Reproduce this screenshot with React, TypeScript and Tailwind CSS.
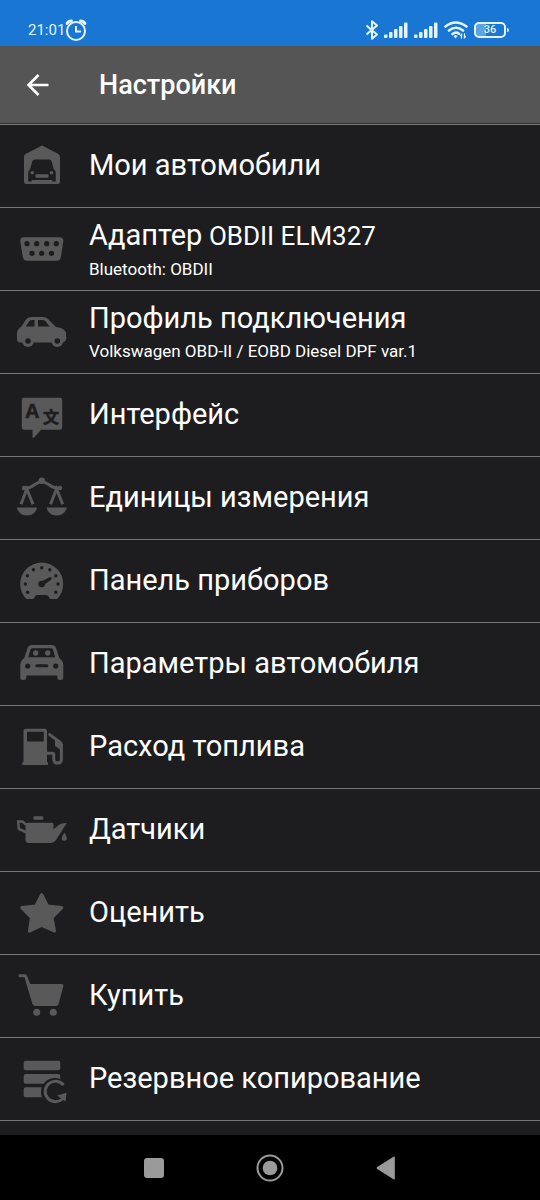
import React from 'react';

interface SettingsItem {
  title: string;
  model?: string;
  subtitle?: string;
  icon: React.ReactNode;
}

const GarageIcon = () => (
  <>
    <path d="M25 4.5 41.5 13q1.500 1 1.500 3v24.500q0 2.500-2.500 2.500h-31q-2.500 0-2.500-2.500V16q0-2 1.500-3z" />
    <path className="fill-[#1d1d1f]" d="M18 18.500h14q2 0 2.700 2l2 7.500q2 1.500 2 4v8.500h-3.500v-1.500h-20.500v1.500h-3.500v-8.500q0-2.500 2-4l2-7.500q.8-2 2.800-2z" />
    <circle cx="15.200" cy="31.700" r="1.800" />
    <circle cx="34.500" cy="31.700" r="1.800" />
    <rect x="18.500" y="33.200" width="13" height="3.500" rx="1" />
  </>
);

const PortIcon = () => (
  <>
    <path d="M7 13.300h35.500q4.300 0 3.800 4.200l-2.300 15q-.6 4.200-4.500 4.200H10.200q-3.900 0-4.500-4.200l-2.400-15q-.4-4.200 3.700-4.200z" />
    <g className="fill-[#1d1d1f]">
      <circle cx="10" cy="19.700" r="2.600" />
      <circle cx="19.700" cy="19.700" r="2.600" />
      <circle cx="29.700" cy="19.700" r="2.600" />
      <circle cx="39.300" cy="19.700" r="2.600" />
      <circle cx="15" cy="29.400" r="2.600" />
      <circle cx="24.700" cy="29.400" r="2.600" />
      <circle cx="34.500" cy="29.400" r="2.600" />
    </g>
  </>
);

const CarSideIcon = () => (
  <>
    <path d="M14 10h12q3 0 5 2l8 8q9 .8 10 6v3q1 1.500 0 3.500-1 3-4 3H2.500Q0 35 0 32v-6q0-3.500 4.500-6.500l4.500-7q1.500-2.500 5-2.500z" />
    <circle cx="11" cy="34" r="5.900" />
    <circle cx="40.300" cy="34" r="5.900" />
    <g className="fill-[#1d1d1f]">
      <path d="M14.500 13h3v6.500H8.800l3.200-5q.8-1.500 2.500-1.500zM21 13h4.500q1.800 0 3 1.200l4 5.300H21z" />
      <circle cx="11" cy="34" r="2.800" />
      <circle cx="40.300" cy="34" r="2.800" />
    </g>
  </>
);

const TranslateIcon = () => (
  <>
    <path d="M7 7.700h36q2.200 0 2.200 2.200v27.600q0 2.200-2.200 2.200H24l-6.500 7.500q-1 .8-2 .3v-7.800H7q-2.200 0-2.200-2.200V9.900q0-2.200 2.200-2.200z" />
    <text className="fill-[#1d1d1f] stroke-[#1d1d1f] font-['Liberation_Sans',sans-serif] text-[20px] font-bold" strokeWidth="0.600" x="8" y="28">A</text>
    <text className="fill-[#1d1d1f] stroke-[#1d1d1f] font-['Noto_Sans_CJK_SC',sans-serif] text-[16px] font-bold" strokeWidth="0.600" x="26" y="33">文</text>
  </>
);

const ScalesIcon = () => (
  <>
    <g className="fill-none stroke-[#595959]" strokeWidth="3" strokeLinecap="round">
      <path d="M7 15.300q6 0 10-3.300l7.700-4.300 7.800 4.300q4 3.300 10.500 3.300" />
      <path strokeWidth="3" strokeLinecap="butt" d="M4 31.300 9.800 16l6.200 15.300M33.500 31.300 39.500 16l6.200 15.300" />
    </g>
    <circle cx="24.800" cy="7.800" r="3.200" />
    <circle cx="7" cy="15" r="2.200" />
    <circle cx="43" cy="15" r="2.200" />
    <path d="M0 34.600h20q0 2-2 4.500-3 3.500-8 3.500t-8-3.500q-2-2.500-2-4.500zM29.700 34.600h20q0 2-2 4.500-3 3.500-8 3.500t-8-3.500q-2-2.500-2-4.500z" />
  </>
);

const GaugeIcon = () => (
  <>
    <path d="M9.500 43Q3.200 37 3.200 28a21.500 21.500 0 0 1 43 0q0 9-6.200 15h-6q-1.500 0-2.500-2.500-.6-1.500-2-1.500h-9.500q-1.400 0-2 1.500-1 2.500-2.500 2.500z" />
    <g className="fill-[#1d1d1f]">
      <circle cx="24.700" cy="11.700" r="1.700" />
      <circle cx="16.400" cy="13.800" r="1.700" />
      <circle cx="32.800" cy="13.800" r="1.700" />
      <circle cx="10.400" cy="19.800" r="1.700" />
      <circle cx="38.800" cy="19.800" r="1.700" />
      <circle cx="8.300" cy="28" r="1.700" />
      <circle cx="41.100" cy="28" r="1.700" />
      <circle cx="10.600" cy="36.300" r="1.700" />
      <circle cx="38.800" cy="36.300" r="1.700" />
      <circle cx="24.700" cy="28" r="3.300" />
      <path d="m23.500 26 9-4.700q1.500-.5 2 .5t-.5 2L26 29.500z" />
    </g>
  </>
);

const CarFrontIcon = () => (
  <>
    <path d="M15 6h19.500q3.500 0 4.500 3l3.300 10q4 2.500 4 7.500v12q0 2.500-3 2.500t-3-2.500v-2h-31v2q0 2.500-3 2.500t-3-2.500v-12q0-5 4-7.500l3.300-10q1-3 4.400-3z" />
    <g className="fill-[#1d1d1f]">
      <path d="M15.500 9.200H34q1.500 0 2 1.300l2.200 7.700H11.300l2.200-7.700q.5-1.300 2-1.300z" />
      <circle cx="10.700" cy="27" r="2.600" />
      <circle cx="38.700" cy="27" r="2.600" />
      <rect x="18.300" y="25.300" width="13" height="3" rx="1.500" />
    </g>
    <circle cx="18.700" cy="14" r="2.700" />
    <circle cx="30.700" cy="14" r="2.700" />
  </>
);

const FuelIcon = () => (
  <>
    <path d="M9 6.700h18.500q2.500 0 2.500 2.500v30.600l1 .8v2.400H5.300v-2.400l1.200-.8V9.200q0-2.500 2.500-2.500z" />
    <rect className="fill-[#1d1d1f]" x="10" y="9.800" width="16.800" height="9.800" rx="1" />
    <path d="M31.300 11.500q1-.8 2.300 0l10 7.200q2.200 1.600 2.200 4.300l-2.500 4.500-5.300-3.500v-5.500l-6.700-5.200z" />
    <path className="fill-none stroke-[#595959]" strokeWidth="3" d="M29.500 31.300H35q1.800 0 1.800 1.700v4.500q0 3.600 3.800 3.600t3.800-3.600V22" />
  </>
);

const OilIcon = () => (
  <>
    <rect x="16.500" y="11.300" width="9.800" height="3.500" rx="1.200" />
    <path d="M11 17.700h24q1.500 0 1.500 1.500v5l6-4.700q2-1.700 7.300-1.500L39 35q-1.800 3-5 3H12q-3.500 0-3.500-3.500V20q0-2.300 2.500-2.300z" />
    <path className="fill-none stroke-[#595959]" strokeWidth="2.500" d="M9.500 20 5.500 16.500H1.200l.6 7.500 8 3.500" />
    <path d="M47.300 27.500q2.500 4 2.500 5.800a2.500 2.500 0 0 1-5 0q0-1.800 2.500-5.800z" />
  </>
);

const StarIcon = () => (
  <path
    className="stroke-[#595959]"
    strokeWidth="3"
    strokeLinejoin="round"
    d="m24.700 6.500 5.800 11.500 14.300 1.600-9.800 10 2.500 13.500-12.800-5.600-12.300 5.600 2.100-13.500-9.800-10L18.900 18z"
  />
);

const CartIcon = () => (
  <>
    <path d="M3 3.300h4.500q2 0 2.700 1.700l3 8H44.500q2.300 0 1.800 2.200l-4.500 17q-.8 2.800-3.600 2.800H19q-3 0-3.800-2.800L7.500 6.200H3q-1.500 0-1.500-1.500T3 3.300z" />
    <circle cx="19.700" cy="41.300" r="3.500" />
    <circle cx="36.300" cy="41.300" r="3.500" />
  </>
);

const BackupIcon = () => (
  <>
    <rect x="6.700" y="6.700" width="36.600" height="9.500" rx="2" />
    <rect x="6.700" y="19.900" width="36.600" height="9.800" rx="2" />
    <rect x="6.700" y="33.200" width="25" height="10" rx="2" />
    <circle className="fill-[#1d1d1f]" cx="38" cy="38" r="14" />
    <path className="fill-none stroke-[#595959]" strokeWidth="3" d="M46.500 31A10.300 10.300 0 1 0 45.500 45" />
    <path d="m49.500 38.800-9.300 2.600 8.300 6.300z" />
  </>
);

const items: SettingsItem[] = [
  { title: 'Мои автомобили', icon: <GarageIcon /> },
  { title: 'Адаптер', model: 'OBDII ELM327', subtitle: 'Bluetooth: OBDII', icon: <PortIcon /> },
  { title: 'Профиль подключения', subtitle: 'Volkswagen OBD-II / EOBD Diesel DPF var.1', icon: <CarSideIcon /> },
  { title: 'Интерфейс', icon: <TranslateIcon /> },
  { title: 'Единицы измерения', icon: <ScalesIcon /> },
  { title: 'Панель приборов', icon: <GaugeIcon /> },
  { title: 'Параметры автомобиля', icon: <CarFrontIcon /> },
  { title: 'Расход топлива', icon: <FuelIcon /> },
  { title: 'Датчики', icon: <OilIcon /> },
  { title: 'Оценить', icon: <StarIcon /> },
  { title: 'Купить', icon: <CartIcon /> },
  { title: 'Резервное копирование', icon: <BackupIcon /> },
];

const SignalIcon = () => (
  <svg className="h-4 w-6 fill-[#e3f4ff]" viewBox="0 0 24 16" aria-hidden="true">
    <rect x="0" y="12.500" width="3.500" height="3.500" rx="1" />
    <rect x="5" y="10" width="3.500" height="6" rx="1" />
    <rect x="10" y="7" width="3.500" height="9" rx="1" />
    <rect x="15" y="4" width="3.500" height="12" rx="1" />
    <rect x="20" y="0.500" width="3.500" height="15.500" rx="1" />
  </svg>
);

const StatusBar = () => (
  <div className="flex h-[46px] items-center justify-between bg-[#1976d2] pt-[14px] pr-[31px] pl-7">
    <div className="flex items-center text-[#e3f4ff]">
      <span className="text-[15px] leading-5">21:01</span>
      <svg className="size-[22px] fill-none stroke-current" viewBox="0 0 22 22" aria-hidden="true">
        <circle cx="11" cy="12" r="9" strokeWidth="2" />
        <path strokeWidth="2" d="M11 7v5.500h5" />
        <path strokeWidth="2.800" strokeLinecap="round" d="M2 4.500Q3.500 2 6.500 2M20 4.500Q18.500 2 15.500 2" />
      </svg>
    </div>
    <div className="flex items-center gap-1.5 text-[#e3f4ff]">
      <svg className="h-5 w-3 fill-none stroke-current" viewBox="0 0 12 20" strokeWidth="2" strokeLinejoin="round" aria-hidden="true">
        <path d="m.5 5.500 10.500 9L6 18.800V1.200L11 5.500.5 14.500" />
      </svg>
      <SignalIcon />
      <SignalIcon />
      <svg className="h-[18px] w-6 fill-none stroke-current" viewBox="0 0 24 18" strokeWidth="2.600" strokeLinecap="round" aria-hidden="true">
        <path d="M1.500 5.500q10-8 21 0M5 9.500q7-5.500 14 0M8.500 13q3.500-2.600 6.500-.3" />
        <path className="fill-current stroke-none" d="m9.500 15 2-1 2 1-2 2.500z" />
        <path strokeWidth="1.300" d="M17.500 17v-3.500l-1 1M20.500 13v3.500l1-1" />
      </svg>
      <div className="flex items-center gap-px">
        <span className="flex h-4 w-8 items-center justify-center rounded-[5px] border-2 border-current bg-linear-to-r from-[#5ba3e4] from-35% to-transparent to-35% text-[11px] leading-3 font-medium">
          36
        </span>
        <span className="h-1 w-0.5 rounded-r-sm bg-current" />
      </div>
    </div>
  </div>
);

const NavigationBar = () => (
  <nav className="flex h-[65px] items-center justify-center gap-[88px] bg-black" aria-label="Системная навигация">
    <button type="button" className="size-7" aria-label="Недавние">
      <svg className="size-7 fill-[#9a9a9a]" viewBox="0 0 28 28">
        <rect x="4" y="4" width="20" height="20" rx="3" />
      </svg>
    </button>
    <button type="button" className="size-7" aria-label="Домой">
      <svg className="size-7 fill-[#9a9a9a]" viewBox="0 0 28 28">
        <circle cx="14" cy="14" r="7.300" />
        <circle className="fill-none stroke-[#9a9a9a]" cx="14" cy="14" r="12.500" strokeWidth="2" />
      </svg>
    </button>
    <button type="button" className="size-7" aria-label="Назад">
      <svg className="size-7 fill-[#9a9a9a]" viewBox="0 0 28 28">
        <path d="M22.800 3.500v21q0 1.500-1.300.8L5.200 15q-1.200-1 0-2L21.500 2.700q1.300-.7 1.300.8z" />
      </svg>
    </button>
  </nav>
);

const SettingsRow = ({ item }: { item: SettingsItem }) => (
  <li className="border-b border-[#777777]">
    <button type="button" className="flex h-[82px] w-full items-center gap-[22px] px-[17px] text-left">
      <svg className="size-[50px] shrink-0 fill-[#595959]" viewBox="0 0 50 50" aria-hidden="true">
        {item.icon}
      </svg>
      {item.subtitle ? (
        <span className="flex min-w-0 flex-col pt-0.5">
          <span className="text-[29px] leading-9">
            {item.title}
            {item.model && <span className="text-[26px]"> {item.model}</span>}
          </span>
          <span className="text-[17px] leading-[30px]">{item.subtitle}</span>
        </span>
      ) : (
        <span className="min-w-0 pb-0.5 text-[29px] leading-9">{item.title}</span>
      )}
    </button>
  </li>
);

export default function App() {
  return (
    <div className="flex min-h-screen flex-col bg-[#1d1d1f] font-['Roboto',sans-serif] text-white">
      <StatusBar />

      <header className="flex h-[78px] items-center gap-[49px] border-b border-[#303030] bg-[#555555] pl-[26px]">
        <button type="button" aria-label="Назад">
          <svg className="size-6 fill-none stroke-white" viewBox="0 0 24 24" strokeWidth="2.600">
            <path d="M22.500 12H3M12.500 2 2.500 12l10 10" />
          </svg>
        </button>
        <h1 className="text-[27px] leading-9 font-medium">Настройки</h1>
      </header>

      <main className="flex-1 border-t border-[#777777]">
        <ul>
          {items.map((item) => (
            <SettingsRow key={item.title} item={item} />
          ))}
        </ul>
      </main>

      <NavigationBar />
    </div>
  );
}
